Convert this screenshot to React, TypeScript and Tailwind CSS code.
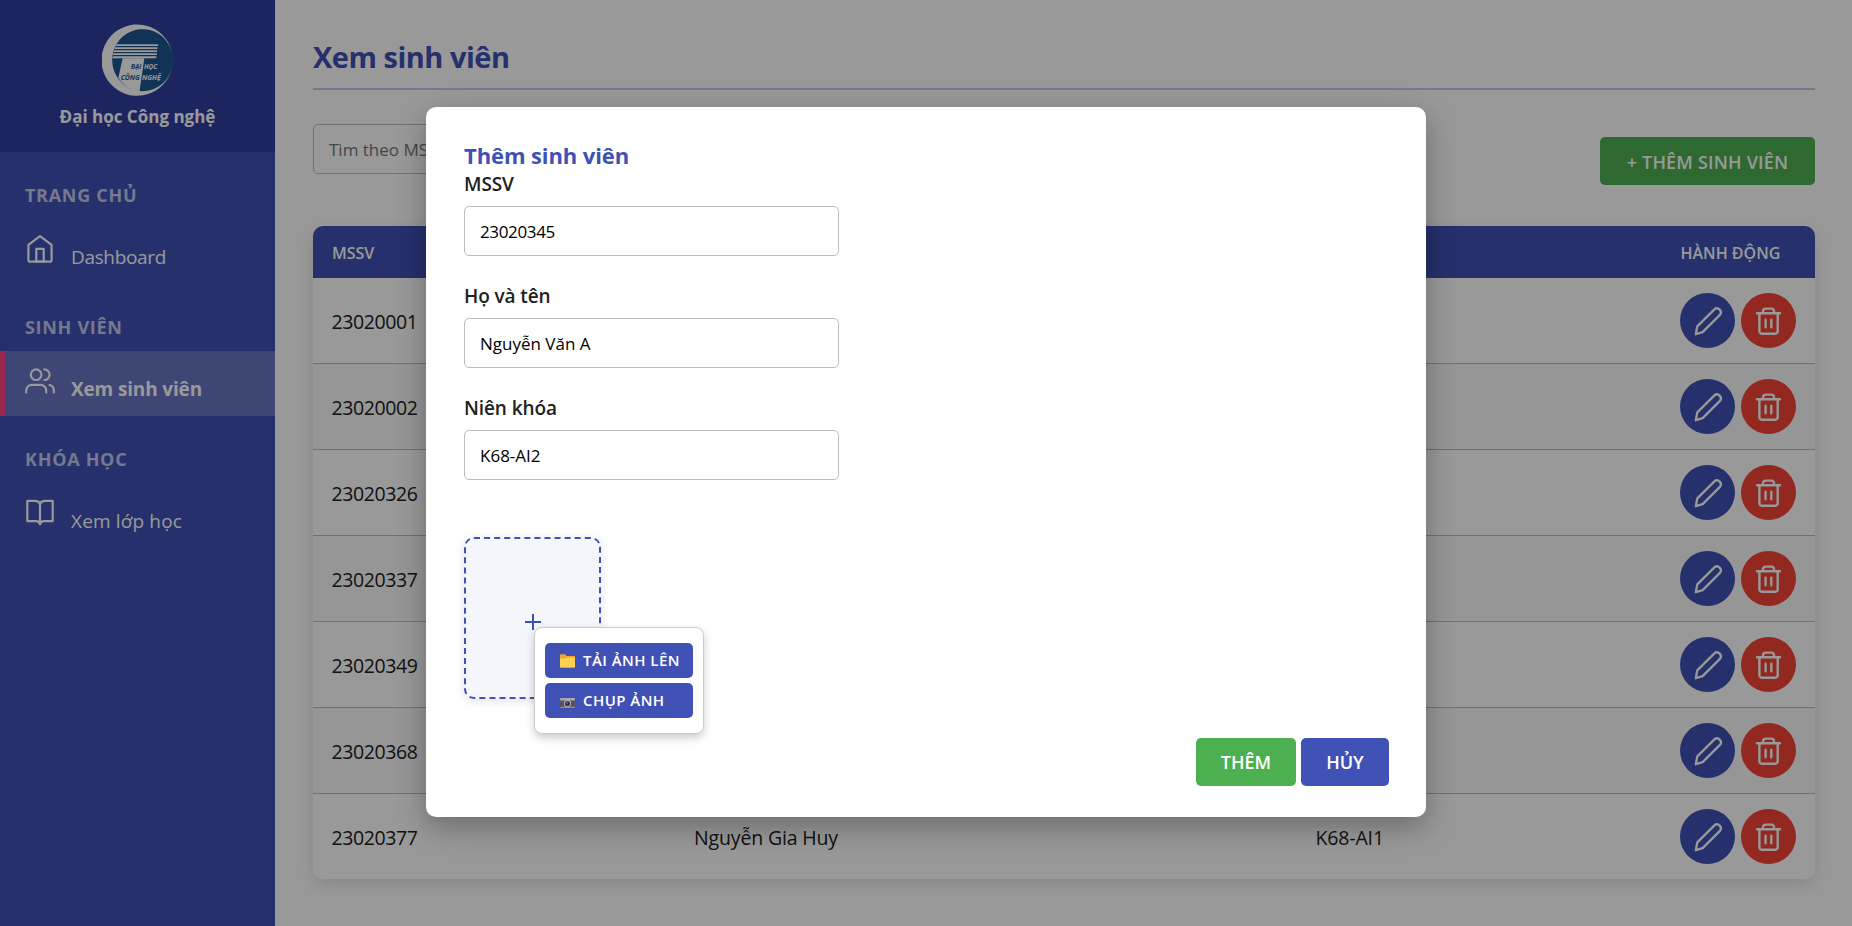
import type { ReactNode } from 'react'

const students = [
  { id: '23020001', name: 'Nguyễn Văn An', year: 'K68-AI1' },
  { id: '23020002', name: 'Trần Minh Anh', year: 'K68-AI1' },
  { id: '23020326', name: 'Lê Quang Dũng', year: 'K68-AI1' },
  { id: '23020337', name: 'Phạm Thu Hà', year: 'K68-AI1' },
  { id: '23020349', name: 'Vũ Đức Hiếu', year: 'K68-AI1' },
  { id: '23020368', name: 'Đỗ Mạnh Hùng', year: 'K68-AI1' },
  { id: '23020377', name: 'Nguyễn Gia Huy', year: 'K68-AI1' },
]

function Logo() {
  return (
    <svg className="block h-[72px] w-[72px]" viewBox="36 44 216 216">
      <circle cx="144" cy="152" r="107" fill="#1d5590" />
      <path d="M247 135A107 107 0 1 0 247 170A91 93 0 1 1 247 135Z" fill="#fff" />
      <g fill="#fff">
        <path d="M80 105H205L204 110H77ZM75 114H203L202 119H73ZM72 123H202L201 128H71ZM70 132H201L200 137H69ZM69 141H200L198 147H68Z" />
        <path d="M98 147H163L148 250Q108 240 85 206Z" />
      </g>
      <g fontFamily="Liberation Sans Narrow, Open Sans, sans-serif" fontSize="22" fontWeight="700" fontStyle="italic">
        <text x="123" y="179" textLength="31" lengthAdjust="spacingAndGlyphs" fill="#1d5590">ĐẠI</text>
        <text x="162" y="179" textLength="40" lengthAdjust="spacingAndGlyphs" fill="#fff">HỌC</text>
        <text x="92" y="211" textLength="57" lengthAdjust="spacingAndGlyphs" fill="#1d5590">CÔNG</text>
        <text x="156" y="211" textLength="56" lengthAdjust="spacingAndGlyphs" fill="#fff">NGHỆ</text>
      </g>
    </svg>
  )
}

function NavIcon({ children }: { children: ReactNode }) {
  return (
    <svg
      className="mt-[15px] h-[30px] w-[30px] shrink-0"
      viewBox="0 0 30 30"
      fill="none"
      stroke="currentColor"
      strokeWidth="2.2"
      strokeLinecap="round"
      strokeLinejoin="round"
    >
      {children}
    </svg>
  )
}

const homeIcon = (
  <>
    <path d="M15 2.2 3.4 10.9V25.7a2 2 0 0 0 2 2H24.6a2 2 0 0 0 2-2V10.9Z" />
    <path d="M11.3 27.5V14.8h7.4V27.5Z" />
  </>
)

const usersIcon = (
  <>
    <circle cx="11.1" cy="8.7" r="5.3" />
    <path d="M19.3 3.4a5.3 5.3 0 0 1 0 10.6M1.2 26.6v-2a5.7 5.7 0 0 1 5.7-5.7h8.6a5.7 5.7 0 0 1 5.7 5.7v2M24.4 19a5.6 5.6 0 0 1 4.4 5.5v2.1" />
  </>
)

const bookIcon = (
  <path d="M15 6.2Q14 2.8 10.3 2.8H2.3V23.2H11.2Q14 23.2 15 26.4Q16 23.2 18.8 23.2H27.7V2.8H19.7Q16 2.8 15 6.2ZM15 6.2V26.2" />
)

type SectionProps = { label: string; item: ReactNode; icon: ReactNode; active?: boolean }

function Section({ label, item, icon, active }: SectionProps) {
  return (
    <section>
      <h3 className="h-[67px] pt-[30px] pl-[25px] text-[18px] leading-[26px] font-bold tracking-[0.7px] whitespace-nowrap text-[#c5cae9]">
        {label}
      </h3>
      <div
        className={
          active
            ? 'flex h-[65px] border-l-5 border-[#ff4081] bg-[#6775c4] pl-5 font-bold text-white'
            : 'flex h-[65px] pl-[25px] text-white'
        }
      >
        <NavIcon>{icon}</NavIcon>
        <div className="ml-4 pt-[25px] text-[19px] leading-[26px] whitespace-nowrap">{item}</div>
      </div>
    </section>
  )
}

function PenButton() {
  return (
    <button className="h-[55px] w-[55px] rounded-full bg-[#3f51b5] text-white">
      <svg viewBox="0 0 55 55" fill="none" stroke="currentColor" strokeWidth="2.3" strokeLinejoin="round">
        <path d="M15.8 41.2 17.3 33.4 34.4 16.4a3.9 3.9 0 0 1 5.5 5.5L22.6 39.1Z" />
      </svg>
    </button>
  )
}

function TrashButton() {
  return (
    <button className="h-[55px] w-[55px] rounded-full bg-[#f44336] text-white">
      <svg
        viewBox="0 0 55 55"
        fill="none"
        stroke="currentColor"
        strokeWidth="2.4"
        strokeLinecap="round"
        strokeLinejoin="round"
      >
        <path d="M16 20.2H39M22 20V18.2a2.6 2.6 0 0 1 2.6-2.6h5.8a2.6 2.6 0 0 1 2.6 2.6V20M18.4 20.4V38.4a2.3 2.3 0 0 0 2.3 2.3H34.4a2.3 2.3 0 0 0 2.3-2.3V20.4M24.6 26.8v7.4M30.3 26.8v7.4" />
      </svg>
    </button>
  )
}

function Field({ label, value }: { label: string; value: ReactNode }) {
  return (
    <div className="mb-[20px]">
      <label className="block h-[42px] pt-[8px] text-[19px] leading-[25px] font-semibold tracking-[-0.1px] whitespace-nowrap text-[#212121]">
        {label}
      </label>
      <div className="flex h-[50px] w-[375px] items-center rounded-[5px] border border-[#bdbdbd] pt-[2px] pl-[15px] text-[17px] text-black">
        {value}
      </div>
    </div>
  )
}

function FolderIcon() {
  return (
    <svg className="h-[14px] w-[15px]" viewBox="0 0 15 14">
      <path d="M0 1.2Q0 .3 .9 .3H5L6.6 1.9H14.2Q15 1.9 15 2.8V12.8Q15 13.6 14.2 13.6H.8Q0 13.6 0 12.8Z" fill="#f2a62e" />
      <path d="M0 4.6H5.6L7 3.6H15V12.8Q15 13.6 14.2 13.6H.8Q0 13.6 0 12.8Z" fill="#ffcf52" />
    </svg>
  )
}

function CameraIcon() {
  return (
    <svg className="mt-[4px] h-[10px] w-[15px]" viewBox="0 0 15 10">
      <rect width="15" height="10" rx=".8" fill="#58525f" />
      <path d="M0 .8Q0 0 .8 0H14.2Q15 0 15 .8V2.4H0Z" fill="#aaa6b2" />
      <path d="M0 8.8H15V9.2Q15 10 14.2 10H.8Q0 10 0 9.2Z" fill="#918c99" />
      <circle cx="7.5" cy="5.6" r="3.5" fill="#c3bfc9" />
      <circle cx="7.5" cy="5.6" r="2.6" fill="#37323f" />
      <circle cx="7" cy="5.1" r=".8" fill="#8c8798" />
    </svg>
  )
}

const menuButton =
  'flex h-[35px] w-[148px] items-center gap-2 rounded-[5px] bg-[#3f51b5] pl-[15px] text-[15px] font-semibold tracking-[0.45px] whitespace-nowrap text-white'

export default function App() {
  return (
    <div className="relative flex h-[926px] w-full overflow-hidden bg-white font-['Open_Sans','Noto_Sans',sans-serif] text-[#212121]">
      <aside className="w-[275px] shrink-0 bg-[#3f51b5]">
        <div className="flex h-[152px] flex-col items-center bg-[#303f9f] pt-6 text-white">
          <Logo />
          <div className="mt-2 text-[17px] leading-[25px] font-bold whitespace-nowrap">Đại học Công nghệ</div>
        </div>
        <Section label="TRANG CHỦ" icon={homeIcon} item={<span className="tracking-[-0.35px]">Dashboard</span>} />
        <Section
          label="SINH VIÊN"
          icon={usersIcon}
          item={<span className="tracking-[-0.15px]">Xem sinh viên</span>}
          active
        />
        <Section label="KHÓA HỌC" icon={bookIcon} item={<span className="tracking-[0.15px]">Xem lớp học</span>} />
      </aside>

      <main className="min-w-0 flex-1 pt-[38px] pr-[37px] pl-[38px]">
        <h1 className="border-b-2 border-[#c5cae9] pb-[13px] text-[29px] leading-[37px] font-bold tracking-[-0.5px] text-[#3f51b5]">
          Xem sinh viên
        </h1>
        <div className="flex h-[136px] items-start justify-between pt-[34px]">
          <div className="flex h-[50px] w-[375px] items-center rounded-[5px] border border-[#bdbdbd] pt-[2px] pl-[15px] text-[17px] text-[#757575]">
            Tìm theo MSSV, họ tên
          </div>
          <button className="mt-[13px] flex h-12 w-[215px] items-center justify-center rounded-[5px] bg-[#4caf50] pt-[2px] text-[18px] font-semibold tracking-[0.2px] whitespace-nowrap text-white">
            + THÊM SINH VIÊN
          </button>
        </div>

        <div className="overflow-hidden rounded-[10px] shadow-[0_5px_15px_rgba(0,0,0,0.12)]">
          <div className="grid h-[52px] grid-cols-[362px_622px_365px_153px] items-center bg-[#3f51b5] pt-[2px] text-[16px] font-semibold whitespace-nowrap text-white">
            <div className="pl-[19px]">MSSV</div>
            <div className="pl-[19px]">HỌ VÀ TÊN</div>
            <div className="pl-[19px]">NIÊN KHÓA</div>
            <div className="pl-[18.5px]">HÀNH ĐỘNG</div>
          </div>
          {students.map((s) => (
            <div
              key={s.id}
              className="grid h-[86px] grid-cols-[362px_622px_365px_153px] items-center border-b border-[#bdbdbd] bg-white text-[19.5px] whitespace-nowrap odd:bg-[#fafafa] last:h-[85px] last:border-b-0"
            >
              <div className="pt-[2px] pl-[18.5px] tracking-[-0.4px]">{s.id}</div>
              <div className="pt-[2px] pl-[19px] tracking-[-0.15px]">{s.name}</div>
              <div className="pt-[2px] pl-[18.5px] tracking-[-0.15px]">{s.year}</div>
              <div className="flex gap-[6px] pl-[18px]">
                <PenButton />
                <TrashButton />
              </div>
            </div>
          ))}
        </div>
      </main>

      <div className="absolute inset-0 flex items-start justify-center bg-black/40 pt-[107px]">
        <div className="relative h-[710px] w-[1000px] rounded-[10px] bg-white pt-[37px] pr-[37px] pl-[38px] shadow-[0_10px_30px_rgba(0,0,0,0.3)]">
          <h2 className="h-[20px] text-[22px] leading-[22px] font-bold tracking-[-0.1px] whitespace-nowrap text-[#3f51b5]">
            Thêm sinh viên
          </h2>
          <Field label="MSSV" value={<span className="tracking-[-0.35px]">23020345</span>} />
          <Field label="Họ và tên" value="Nguyễn Văn A" />
          <Field label="Niên khóa" value="K68-AI2" />

          <div className="mt-[57px] flex h-[162px] w-[137px] items-center justify-center rounded-[10px] border-2 border-dashed border-[#3f51b5] bg-[#f5f6fc] pt-2 text-[#3f51b5] shadow-[0_2px_8px_rgba(0,0,0,0.12)]">
            <svg className="h-4 w-4" viewBox="0 0 16 16" stroke="currentColor" strokeWidth="2">
              <path d="M0 8H16M8 0V16" />
            </svg>
          </div>

          <div className="mt-[39px] flex justify-end gap-[5px] text-[18px] font-semibold text-white">
            <button className="h-12 w-[100px] rounded-[5px] bg-[#4caf50]">THÊM</button>
            <button className="h-12 w-[88px] rounded-[5px] bg-[#3f51b5]">HỦY</button>
          </div>

          <div className="absolute top-[520px] left-[108px] flex h-[107px] w-[170px] flex-col gap-[5px] rounded-[8px] border border-[#ccc] bg-white px-[10px] pt-[15px] shadow-[0_4px_8px_rgba(0,0,0,0.2)]">
            <button className={menuButton}>
              <FolderIcon />
              TẢI ẢNH LÊN
            </button>
            <button className={menuButton}>
              <CameraIcon />
              CHỤP ẢNH
            </button>
          </div>
        </div>
      </div>
    </div>
  )
}
